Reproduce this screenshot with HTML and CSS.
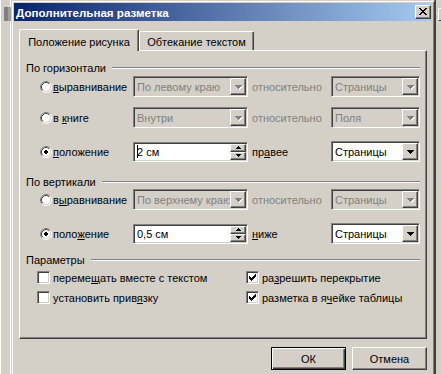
FILE: index.html
```html
<!DOCTYPE html>
<html lang="ru">
<head>
  <meta charset="utf-8">
  <title>Дополнительная разметка</title>
  <link rel="stylesheet" href="styles.css">
</head>
<body>
  <svg class="sprites" xmlns="http://www.w3.org/2000/svg" aria-hidden="true">
    <symbol id="radio" viewBox="0 0 12 12">
      <circle cx="6" cy="6" r="5" fill="#fff"/>
      <path d="M2.11 9.89A5.5 5.5 0 0 1 9.89 2.11" fill="none" stroke="#808080"/>
      <path d="M9.89 2.11A5.5 5.5 0 0 1 2.11 9.89" fill="none" stroke="#fff"/>
      <path d="M2.82 9.18A4.5 4.5 0 0 1 9.18 2.82" fill="none" stroke="#404040"/>
      <path d="M9.18 2.82A4.5 4.5 0 0 1 2.82 9.18" fill="none" stroke="#d4d0c8"/>
    </symbol>
    <symbol id="radio-on" viewBox="0 0 12 12">
      <use href="#radio"/>
      <path d="M5 4h2v1h1v2H7v1H5V7H4V5h1z"/>
    </symbol>
    <symbol id="arrow" viewBox="0 0 7 4">
      <path d="M0 0h7v1H0zM1 1h5v1H1zM2 2h3v1H2zM3 3h1v1H3z"/>
    </symbol>
    <symbol id="arrow-off" viewBox="0 0 8 5">
      <path fill="#fff" d="M1 1h7v1H1zM2 2h5v1H2zM3 3h3v1H3zM4 4h1v1H4z"/>
      <path fill="#808080" d="M0 0h7v1H0zM1 1h5v1H1zM2 2h3v1H2zM3 3h1v1H3z"/>
    </symbol>
    <symbol id="up" viewBox="0 0 5 3">
      <path d="M2 0h1v1H2zM1 1h3v1H1zM0 2h5v1H0z"/>
    </symbol>
    <symbol id="down" viewBox="0 0 5 3">
      <path d="M0 0h5v1H0zM1 1h3v1H1zM2 2h1v1H2z"/>
    </symbol>
    <symbol id="check" viewBox="0 0 7 7">
      <path d="M6 0h1v1H6zM5 1h2v1H5zM0 2h1v1H0zM4 2h3v1H4zM0 3h2v1H0zM3 3h3v1H3zM0 4h5v1H0zM1 5h3v1H1zM2 6h1v1H2z"/>
    </symbol>
    <symbol id="cross" viewBox="0 0 8 7">
      <path d="M0 0h2v1H0zM6 0h2v1H6zM1 1h2v1H1zM5 1h2v1H5zM2 2h4v1H2zM3 3h2v1H3zM2 4h4v1H2zM1 5h2v1H1zM5 5h2v1H5zM0 6h2v1H0zM6 6h2v1H6z"/>
    </symbol>
  </svg>

  <div class="desk">
    <div class="back-left">
      <div class="back-cap"></div>
    </div>

    <div class="dialog">
      <div class="titlebar">
        <span class="title">Дополнительная разметка</span>
        <button class="close" aria-label="Закрыть"><svg class="cross"><use href="#cross"/></svg></button>
      </div>

      <div class="content">
        <div class="tabs">
          <div class="tab tab-active">Положение рисунка</div>
          <div class="tab tab-plain">Обтекание текстом</div>
        </div>

        <div class="panel">
          <div class="group-head">По горизонтали</div>

          <div class="row row-first">
            <label class="opt"><svg class="radio"><use href="#radio"/></svg><span><u>в</u>ыравнивание</span></label>
            <div class="combo combo-off field">
              <span class="combo-text">По левому краю</span>
              <span class="combo-btn"><svg class="arrow-off"><use href="#arrow-off"/></svg></span>
            </div>
            <span class="rel off">относительно</span>
            <div class="combo combo-off field-sm">
              <span class="combo-text">Страницы</span>
              <span class="combo-btn"><svg class="arrow-off"><use href="#arrow-off"/></svg></span>
            </div>
          </div>

          <div class="row">
            <label class="opt"><svg class="radio"><use href="#radio"/></svg><span>в <u>к</u>ниге</span></label>
            <div class="combo combo-off field">
              <span class="combo-text">Внутри</span>
              <span class="combo-btn"><svg class="arrow-off"><use href="#arrow-off"/></svg></span>
            </div>
            <span class="rel off">относительно</span>
            <div class="combo combo-off field-sm">
              <span class="combo-text">Поля</span>
              <span class="combo-btn"><svg class="arrow-off"><use href="#arrow-off"/></svg></span>
            </div>
          </div>

          <div class="row row-wide">
            <label class="opt"><svg class="radio"><use href="#radio-on"/></svg><span><u>п</u>оложение</span></label>
            <div class="combo edit field">
              <span class="combo-text"><span class="caret"></span>2 см</span>
              <span class="spin">
                <span class="spin-btn"><svg class="spin-arrow"><use href="#up"/></svg></span>
                <span class="spin-btn"><svg class="spin-arrow"><use href="#down"/></svg></span>
              </span>
            </div>
            <span class="rel">пр<u>а</u>вее</span>
            <div class="combo field-sm">
              <span class="combo-text">Страницы</span>
              <span class="combo-btn"><svg class="arrow"><use href="#arrow"/></svg></span>
            </div>
          </div>

          <div class="group-head group-next">По вертикали</div>

          <div class="row row-first">
            <label class="opt"><svg class="radio"><use href="#radio"/></svg><span>в<u>ы</u>равнивание</span></label>
            <div class="combo combo-off field">
              <span class="combo-text">По верхнему краю</span>
              <span class="combo-btn"><svg class="arrow-off"><use href="#arrow-off"/></svg></span>
            </div>
            <span class="rel off">относительно</span>
            <div class="combo combo-off field-sm">
              <span class="combo-text">Страницы</span>
              <span class="combo-btn"><svg class="arrow-off"><use href="#arrow-off"/></svg></span>
            </div>
          </div>

          <div class="row row-wide">
            <label class="opt"><svg class="radio"><use href="#radio-on"/></svg><span>поло<u>ж</u>ение</span></label>
            <div class="combo edit field">
              <span class="combo-text">0,5 см</span>
              <span class="spin">
                <span class="spin-btn"><svg class="spin-arrow"><use href="#up"/></svg></span>
                <span class="spin-btn"><svg class="spin-arrow"><use href="#down"/></svg></span>
              </span>
            </div>
            <span class="rel"><u>н</u>иже</span>
            <div class="combo field-sm">
              <span class="combo-text">Страницы</span>
              <span class="combo-btn"><svg class="arrow"><use href="#arrow"/></svg></span>
            </div>
          </div>

          <div class="group-head group-params">Параметры</div>

          <div class="checks">
            <label class="check"><span class="box"></span><span>переме<u>щ</u>ать вместе с текстом</span></label>
            <label class="check"><span class="box"><svg class="tick"><use href="#check"/></svg></span><span>ра<u>з</u>решить перекрытие</span></label>
            <label class="check"><span class="box"></span><span>установить прив<u>я</u>зку</span></label>
            <label class="check"><span class="box"><svg class="tick"><use href="#check"/></svg></span><span>разметка в я<u>ч</u>ейке таблицы</span></label>
          </div>
        </div>

        <div class="actions">
          <button class="btn btn-default">ОК</button>
          <button class="btn">Отмена</button>
        </div>
      </div>
    </div>

    <div class="back-right">
      <div class="back-btn"></div>
    </div>
  </div>
</body>
</html>
```

FILE: styles.css
```css
*, *::before, *::after {
  box-sizing: border-box;
}

html, body {
  margin: 0;
}

body {
  overflow: hidden;
  background-color: #D4D0C8;
  color: #000000;
  font-family: "Liberation Sans", Arial, sans-serif;
  font-size: 11px;
}

.sprites {
  display: none;
}

u {
  text-decoration-thickness: 1px;
}

.desk {
  display: flex;
  height: 374px;
  overflow: hidden;
}

/* окна позади диалога */
.back-left {
  flex: none;
  width: 11px;
  padding: 7px 0 0 3px;
  border-left: 1px solid #FFFFFF;
  border-right: 1px solid #FFFFFF;
}

.back-cap {
  width: 7px;
  height: 14px;
  border-right: 3px solid #A0A0A0;
  background-color: #808080;
}

.back-right {
  flex: 1;
  padding: 8px 0 0 2px;
  border-left: 1px solid #404040;
}

.back-btn {
  height: 13px;
  border-top: 1px solid #FFFFFF;
  border-left: 1px solid #FFFFFF;
  border-bottom: 1px solid #404040;
}

/* диалог */
.dialog {
  flex: none;
  width: 424px;
  height: 420px;
  padding: 2px;
  border: 1px solid;
  border-color: #D4D0C8 #404040 #404040 #D4D0C8;
  box-shadow: inset 1px 1px #FFFFFF, inset -1px -1px #808080;
}

.titlebar {
  display: flex;
  align-items: center;
  justify-content: space-between;
  height: 18px;
  padding: 0 1px 0 2px;
  background: linear-gradient(to right, #0A246A, #A6CAF0);
}

.title {
  color: #FFFFFF;
  font-size: 11.6px;
  font-weight: bold;
}

.close {
  display: flex;
  align-items: center;
  justify-content: center;
  width: 16px;
  height: 14px;
  padding: 0 0 1px 0;
  border: 1px solid;
  border-color: #FFFFFF #404040 #404040 #FFFFFF;
  box-shadow: inset -1px -1px #808080;
  background-color: #D4D0C8;
}

.cross {
  width: 8px;
  height: 7px;
  fill: #000000;
}

.content {
  padding: 8px 5px 0;
}

/* вкладки */
.tabs {
  display: flex;
  align-items: flex-end;
  height: 21px;
}

.tab {
  display: flex;
  align-items: center;
  justify-content: center;
  height: 19px;
  padding-top: 2px;
  border: 1px solid;
  border-bottom: 0;
  border-color: #FFFFFF #404040 #404040 #FFFFFF;
  border-radius: 2px 2px 0 0;
  box-shadow: inset -1px 0 #808080;
  background-color: #D4D0C8;
}

.tab-active {
  position: relative;
  width: 120px;
  height: 22px;
  margin-bottom: -1px;
}

.tab-plain {
  width: 115px;
}

.panel {
  height: 289px;
  padding: 10px 5px 0 6px;
  border: 1px solid;
  border-color: #FFFFFF #404040 #404040 #FFFFFF;
  box-shadow: inset -1px -1px #808080;
}

/* группы */
.group-head {
  display: flex;
  align-items: center;
  gap: 6px;
  height: 13px;
}

.group-head::after {
  content: "";
  flex: 1;
  margin-right: 1px;
  border-top: 1px solid #808080;
  border-bottom: 1px solid #FFFFFF;
}

.group-next {
  margin-top: 13px;
}

.group-params {
  margin-top: 9px;
}

.row {
  display: flex;
  align-items: center;
  height: 21px;
  margin-top: 10px;
}

.row-first {
  margin-top: 2px;
}

.group-next + .row-first {
  margin-top: 1px;
}

.row-wide {
  margin-top: 13px;
}

.opt {
  display: flex;
  align-items: center;
  gap: 1px;
  width: 107px;
  padding-left: 14px;
}

.radio {
  width: 12px;
  height: 12px;
  flex: none;
}

.rel {
  width: 83px;
  padding-left: 4px;
  white-space: nowrap;
}

.off {
  color: #808080;
}

/* поля со списком */
.combo {
  display: flex;
  height: 21px;
  padding: 1px;
  border: 1px solid;
  border-color: #808080 #FFFFFF #FFFFFF #808080;
  box-shadow: inset 1px 1px #404040, inset -1px -1px #D4D0C8;
  background-color: #FFFFFF;
}

.combo-off {
  background-color: #D4D0C8;
  color: #808080;
}

.field {
  width: 115px;
}

.field-sm {
  width: 89px;
}

.edit {
  height: 20px;
}

.combo-text {
  display: flex;
  align-items: center;
  flex: 1;
  min-width: 0;
  padding-left: 2px;
  overflow: hidden;
  white-space: nowrap;
}

.caret {
  width: 1px;
  height: 13px;
  margin-right: -1px;
  background-color: #000000;
}

.combo-btn, .spin-btn {
  display: flex;
  align-items: center;
  justify-content: center;
  border: 1px solid;
  border-color: #FFFFFF #404040 #404040 #FFFFFF;
  box-shadow: inset -1px -1px #808080;
  background-color: #D4D0C8;
}

.combo-btn {
  width: 16px;
  height: 17px;
  flex: none;
}

.arrow {
  width: 7px;
  height: 4px;
  fill: #000000;
}

.arrow-off {
  width: 8px;
  height: 5px;
  margin: 1px 0 0 1px;
}

.spin {
  display: flex;
  flex-direction: column;
  flex: none;
  width: 16px;
}

.spin-btn {
  height: 8px;
}

.spin-arrow {
  width: 5px;
  height: 3px;
  fill: #000000;
}

/* флажки */
.checks {
  display: grid;
  grid-template-columns: 209px 1fr;
  row-gap: 7px;
  margin-top: 5px;
  padding-left: 11px;
}

.check {
  display: flex;
  align-items: center;
  gap: 3px;
  height: 13px;
  white-space: nowrap;
}

.box {
  display: flex;
  align-items: center;
  justify-content: center;
  flex: none;
  width: 13px;
  height: 13px;
  border: 1px solid;
  border-color: #808080 #FFFFFF #FFFFFF #808080;
  box-shadow: inset 1px 1px #404040, inset -1px -1px #D4D0C8;
  background-color: #FFFFFF;
}

.tick {
  width: 7px;
  height: 7px;
  fill: #000000;
}

/* кнопки */
.actions {
  display: flex;
  justify-content: flex-end;
  gap: 6px;
  margin-top: 8px;
}

.btn {
  width: 75px;
  height: 23px;
  padding: 0;
  border: 1px solid;
  border-color: #FFFFFF #404040 #404040 #FFFFFF;
  box-shadow: inset -1px -1px #808080;
  background-color: #D4D0C8;
  color: #000000;
  font: inherit;
}

.btn-default {
  border-color: #000000;
  box-shadow: inset 1px 1px #FFFFFF, inset -1px -1px #404040, inset -2px -2px #808080;
}
```
